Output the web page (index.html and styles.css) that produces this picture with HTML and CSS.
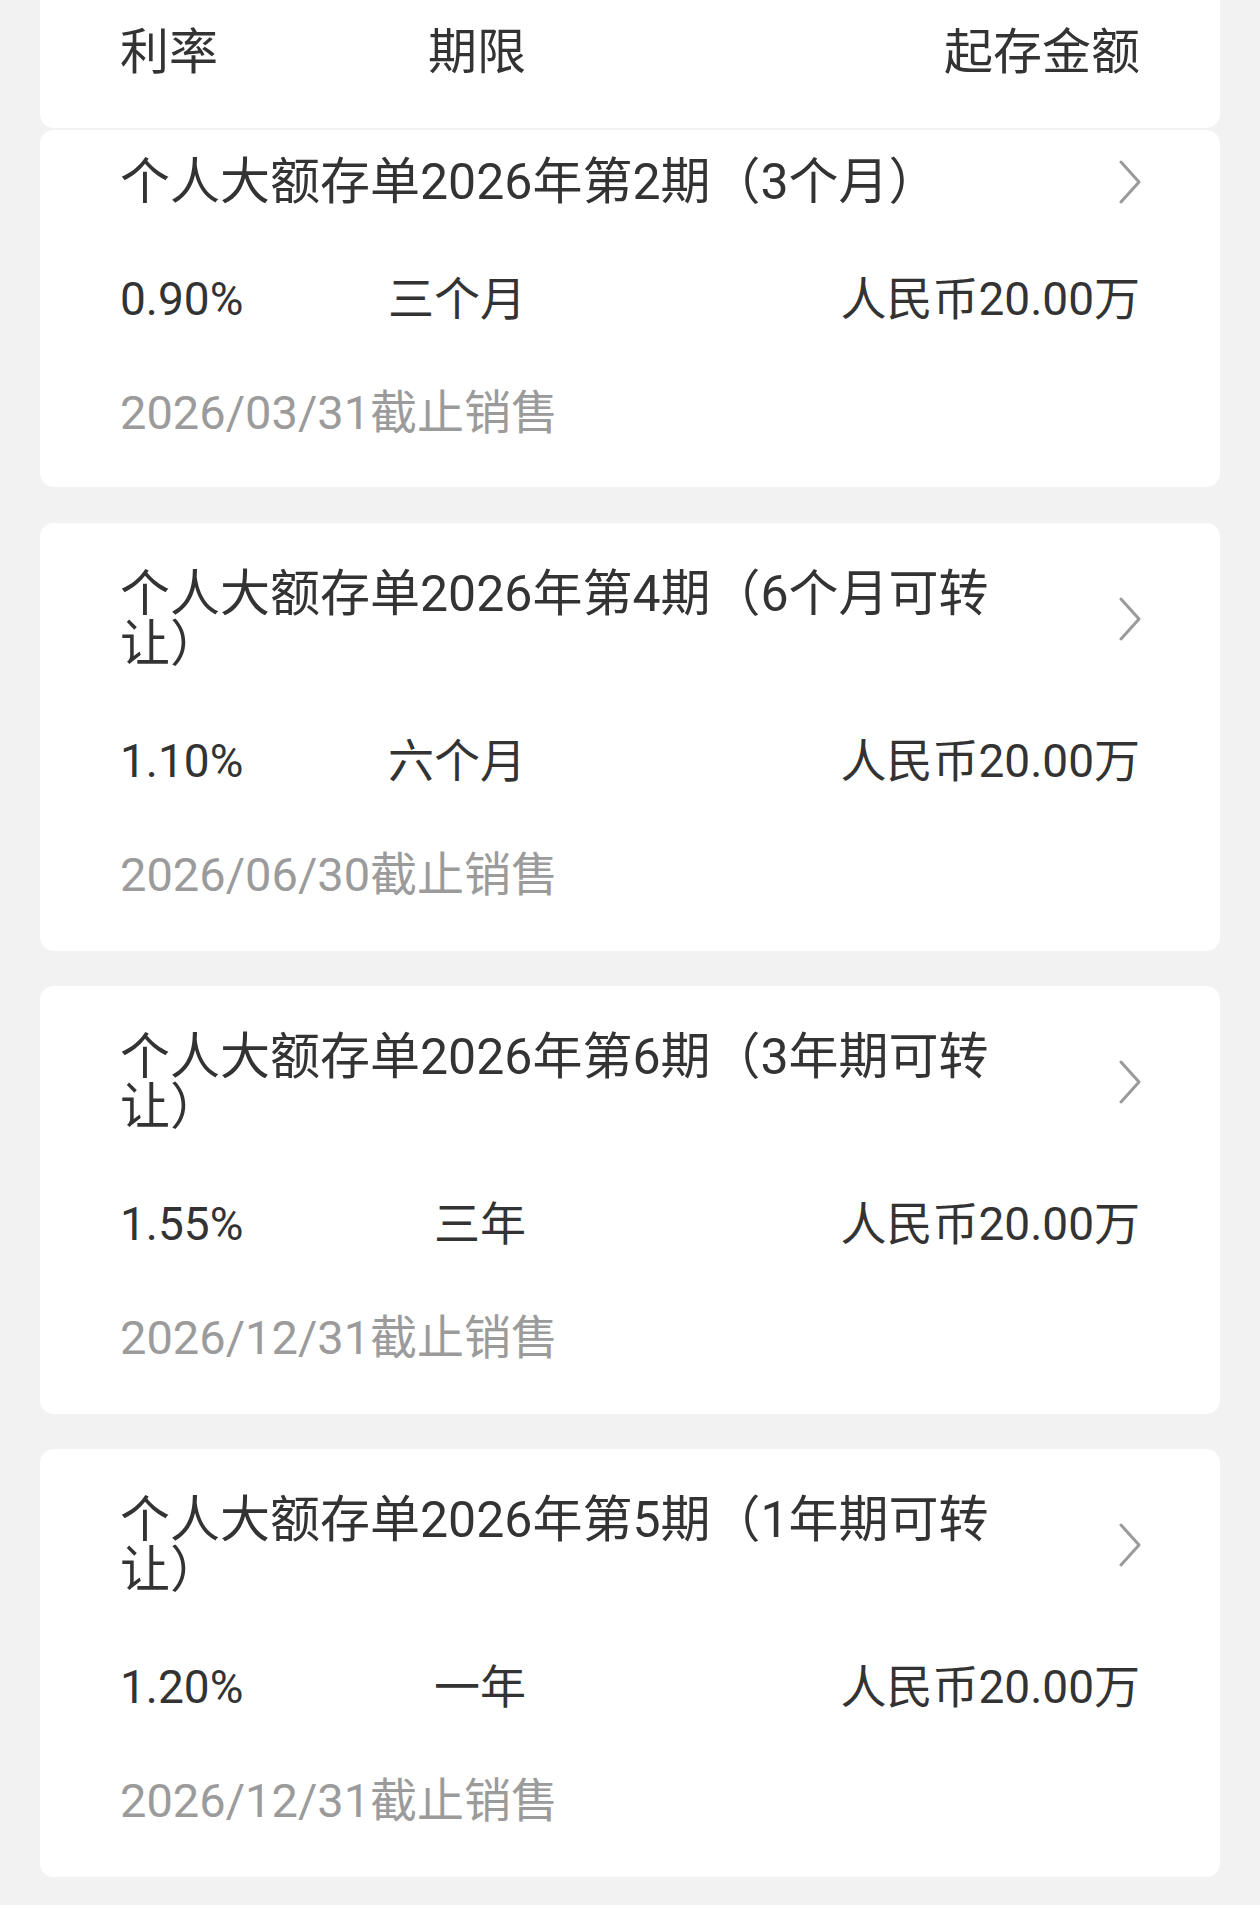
FILE: index.html
```html
<!DOCTYPE html>
<html lang="zh-CN">
  <head>
    <meta charset="UTF-8" />
    <meta name="viewport" content="width=device-width, initial-scale=1.0" />
    <title>大额存单</title>
    <link rel="stylesheet" href="styles.css">
  </head>
  <body>
    <div class="page">
      <header class="head cols">
        <span>利率</span>
        <span class="mid">期限</span>
        <span class="end">起存金额</span>
      </header>

      <div class="card first">
        <div class="top">
          <div class="name">个人大额存单2026年第2期（3个月）</div>
          <svg class="arrow" viewBox="0 0 24 44"><polyline points="3,2 21,22 3,42" /></svg>
        </div>
        <div class="cols row">
          <span>0.90%</span>
          <span class="mid">三个月</span>
          <span class="end">人民币20.00万</span>
        </div>
        <div class="date">2026/03/31截止销售</div>
      </div>

      <div class="card">
        <div class="top">
          <div class="name">个人大额存单2026年第4期（6个月可转让）</div>
          <svg class="arrow" viewBox="0 0 24 44"><polyline points="3,2 21,22 3,42" /></svg>
        </div>
        <div class="cols row">
          <span>1.10%</span>
          <span class="mid">六个月</span>
          <span class="end">人民币20.00万</span>
        </div>
        <div class="date">2026/06/30截止销售</div>
      </div>

      <div class="card">
        <div class="top">
          <div class="name">个人大额存单2026年第6期（3年期可转让）</div>
          <svg class="arrow" viewBox="0 0 24 44"><polyline points="3,2 21,22 3,42" /></svg>
        </div>
        <div class="cols row">
          <span>1.55%</span>
          <span class="mid">三年</span>
          <span class="end">人民币20.00万</span>
        </div>
        <div class="date">2026/12/31截止销售</div>
      </div>

      <div class="card">
        <div class="top">
          <div class="name">个人大额存单2026年第5期（1年期可转让）</div>
          <svg class="arrow" viewBox="0 0 24 44"><polyline points="3,2 21,22 3,42" /></svg>
        </div>
        <div class="cols row">
          <span>1.20%</span>
          <span class="mid">一年</span>
          <span class="end">人民币20.00万</span>
        </div>
        <div class="date">2026/12/31截止销售</div>
      </div>
    </div>
  </body>
</html>
```

FILE: styles.css
```css
body {
  margin: 0;
  background-color: #f2f2f2;
  color: #333333;
  font-family: Roboto, "Noto Sans CJK SC", sans-serif;
}
.page {
  padding: 0 40px 25px;
}
.cols {
  display: grid;
  grid-template-columns: 200px 206px 1fr;
}
.cols .mid,
.cols .end {
  text-align: right;
}
.head {
  background-color: #ffffff;
  height: 128px;
  box-sizing: border-box;
  padding: 25px 80px 0;
  font-size: 49px;
  line-height: 56px;
  border-radius: 0 0 14px 14px;
  margin-bottom: 2px;
}
.card {
  background-color: #ffffff;
  border-radius: 14px;
  padding: 46px 80px 48px;
  margin-bottom: 35px;
}
.card.first {
  padding-top: 27px;
  padding-bottom: 46px;
  margin-bottom: 36px;
}
.top {
  display: flex;
  justify-content: space-between;
  align-items: center;
}
.name {
  width: 900px;
  font-size: 50px;
  line-height: 50px;
}
.arrow {
  width: 24px;
  height: 44px;
  margin-right: -2px;
}
.arrow polyline {
  fill: none;
  stroke: #9a9a9a;
  stroke-width: 3;
  stroke-linecap: round;
  stroke-linejoin: round;
}
.row {
  margin-top: 64px;
  font-size: 46px;
  line-height: 56px;
}
.date {
  margin-top: 58px;
  font-size: 47px;
  line-height: 56px;
  color: #9b9b9b;
}
```
